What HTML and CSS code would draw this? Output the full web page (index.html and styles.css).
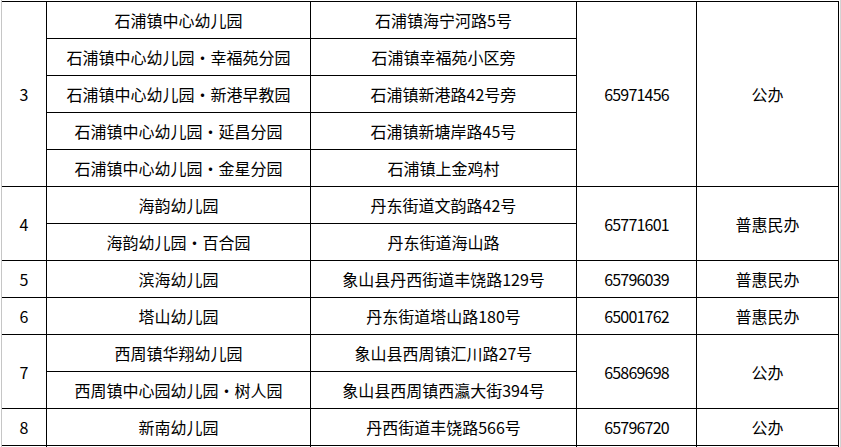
FILE: index.html
```html
<!DOCTYPE html>
<html lang="zh-CN">
<head>
<meta charset="utf-8">
<title>幼儿园名单</title>
<link rel="stylesheet" href="styles.css">
</head>
<body>
<div class="sheet">
<table class="list">
<colgroup>
<col class="c-no"><col class="c-name"><col class="c-addr"><col class="c-tel"><col class="c-type">
</colgroup>
<tbody>
<tr><td class="no" rowspan="5">3</td><td>石浦镇中心幼儿园</td><td>石浦镇海宁河路5号</td><td class="tel" rowspan="5">65971456</td><td rowspan="5">公办</td></tr>
<tr><td>石浦镇中心幼儿园<span class="dot">·</span>幸福苑分园</td><td>石浦镇幸福苑小区旁</td></tr>
<tr><td>石浦镇中心幼儿园<span class="dot">·</span>新港早教园</td><td>石浦镇新港路42号旁</td></tr>
<tr><td>石浦镇中心幼儿园<span class="dot">·</span>延昌分园</td><td>石浦镇新塘岸路45号</td></tr>
<tr><td>石浦镇中心幼儿园<span class="dot">·</span>金星分园</td><td>石浦镇上金鸡村</td></tr>
<tr><td class="no" rowspan="2">4</td><td>海韵幼儿园</td><td>丹东街道文韵路42号</td><td class="tel" rowspan="2">65771601</td><td rowspan="2">普惠民办</td></tr>
<tr><td>海韵幼儿园<span class="dot">·</span>百合园</td><td>丹东街道海山路</td></tr>
<tr><td class="no">5</td><td>滨海幼儿园</td><td>象山县丹西街道丰饶路129号</td><td class="tel">65796039</td><td>普惠民办</td></tr>
<tr><td class="no">6</td><td>塔山幼儿园</td><td>丹东街道塔山路180号</td><td class="tel">65001762</td><td>普惠民办</td></tr>
<tr><td class="no" rowspan="2">7</td><td>西周镇华翔幼儿园</td><td>象山县西周镇汇川路27号</td><td class="tel" rowspan="2">65869698</td><td rowspan="2">公办</td></tr>
<tr><td>西周镇中心园幼儿园<span class="dot">·</span>树人园</td><td>象山县西周镇西瀛大街394号</td></tr>
<tr><td class="no">8</td><td>新南幼儿园</td><td>丹西街道丰饶路566号</td><td class="tel">65796720</td><td>公办</td></tr>
<tr><td class="no"></td><td></td><td></td><td class="tel"></td><td></td></tr>
</tbody>
</table>
</div>
</body>
</html>
```

FILE: styles.css
```css
html, body {
  margin: 0;
  padding: 0;
  background: #ffffff;
  overflow: hidden;
}

.sheet {
  box-sizing: border-box;
  width: 840px;
  height: 447px;
  margin-left: 1px;
  padding-top: 1px;
  padding-right: 1px;
  border-left: 1px solid #c6c6c6;
  border-right: 1px solid #d4d4d4;
  overflow: hidden;
}

.list {
  width: 837px;
  table-layout: fixed;
  border-collapse: separate;
  border-spacing: 0;
  border-top: 1px solid #000;
  font-family: "Noto Sans CJK SC", "Noto Sans", sans-serif;
  font-size: 16px;
  color: #000;
}

.c-no { width: 45px; }
.c-name { width: 264px; }
.c-addr { width: 266px; }
.c-tel { width: 120px; }
.c-type { width: 142px; }

.list td {
  height: 36px;
  padding: 0;
  border-right: 1px solid #000;
  border-bottom: 1px solid #000;
  text-align: center;
  vertical-align: middle;
  white-space: nowrap;
  line-height: 20px;
}

.list td.tel {
  letter-spacing: -0.8px;
}

.dot {
  display: inline-block;
  width: 16px;
  text-align: center;
}
```
